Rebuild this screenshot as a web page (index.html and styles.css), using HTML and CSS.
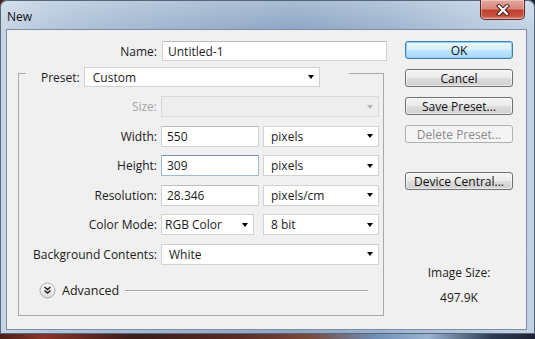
FILE: index.html
```html
<!DOCTYPE html>
<html>
<head>
    <title>New</title>
    <link rel="stylesheet" href="styles.css">
</head>
<body>
    <div class="window">
        <div class="titlebar">
            <span class="title">New</span>
            <div class="close">
                <svg width="14" height="12" viewBox="0 0 14 12">
                    <path d="M3 2 L11 10 M11 2 L3 10" stroke="#4a1e17" stroke-width="4.2" stroke-linecap="square"/>
                    <path d="M3 2 L11 10 M11 2 L3 10" stroke="#fff" stroke-width="2.2" stroke-linecap="square"/>
                </svg>
            </div>
        </div>

        <div class="client">
            <div class="form-side">
                <div class="name-row">
                    <label class="lbl name-lbl" for="name">Name:</label>
                    <input type="text" id="name" class="field name-field" value="Untitled-1">
                </div>

                <div class="group">
                    <div class="group-head">
                        <span class="preset-lbl">Preset:</span>
                        <div class="select preset-select">Custom<span class="arrow"></span></div>
                    </div>

                    <div class="row">
                        <span class="lbl disabled">Size:</span>
                        <div class="select wide off"><span class="arrow"></span></div>
                    </div>

                    <div class="row">
                        <span class="lbl">Width:</span>
                        <div class="pair">
                            <div class="field">550</div>
                            <div class="select">pixels<span class="arrow"></span></div>
                        </div>
                    </div>

                    <div class="row">
                        <span class="lbl">Height:</span>
                        <div class="pair">
                            <div class="field focus">309</div>
                            <div class="select">pixels<span class="arrow"></span></div>
                        </div>
                    </div>

                    <div class="row">
                        <span class="lbl">Resolution:</span>
                        <div class="pair">
                            <div class="field">28.346</div>
                            <div class="select">pixels/cm<span class="arrow"></span></div>
                        </div>
                    </div>

                    <div class="row">
                        <span class="lbl">Color Mode:</span>
                        <div class="pair">
                            <div class="select mode">RGB Color<span class="arrow"></span></div>
                            <div class="select">8 bit<span class="arrow"></span></div>
                        </div>
                    </div>

                    <div class="row">
                        <span class="lbl">Background Contents:</span>
                        <div class="select wide">White<span class="arrow"></span></div>
                    </div>

                    <div class="advanced">
                        <svg class="adv-btn" width="17" height="17" viewBox="0 0 17 17">
                            <defs>
                                <linearGradient id="advg" x1="0" y1="0" x2="0" y2="1">
                                    <stop offset="0" stop-color="#ffffff"/>
                                    <stop offset="1" stop-color="#dcdcdc"/>
                                </linearGradient>
                            </defs>
                            <circle cx="8.5" cy="8.5" r="7.5" fill="url(#advg)" stroke="#a9a9a9"/>
                            <path d="M5.5 5 L8.5 7.5 L11.5 5 M5.5 8.5 L8.5 11 L11.5 8.5" fill="none" stroke="#1a1a1a" stroke-width="1.4"/>
                        </svg>
                        <span class="adv-text">Advanced</span>
                        <span class="adv-line"></span>
                    </div>
                </div>
            </div>

            <div class="button-side">
                <button type="button" class="btn default">OK</button>
                <button type="button" class="btn">Cancel</button>
                <button type="button" class="btn">Save Preset...</button>
                <button type="button" class="btn" disabled>Delete Preset...</button>
                <button type="button" class="btn central">Device Central...</button>

                <div class="size-info">
                    <div>Image Size:</div>
                    <div class="size-value">497.9K</div>
                </div>
            </div>
        </div>
    </div>
</body>
</html>
```

FILE: styles.css
```css
body {
    margin: 0;
    width: 535px;
    height: 339px;
    overflow: hidden;
    font-family: "Open Sans", "Noto Sans", sans-serif;
    font-size: 12px;
    color: #1b1b1b;
    background: linear-gradient(90deg, #4a1f19 0%, #8a3427 8%, #3a1c18 25%, #5b2c24 45%, #7a4a3a 58%, #6f8fb7 70%, #9ab3d2 80%, #2d3b52 92%, #1e2333 100%);
}

.window {
    width: 535px;
    height: 334px;
    box-sizing: border-box;
    padding: 0 8px 4px 6px;
    border-radius: 7px 7px 0 0;
    background:
        linear-gradient(180deg, rgba(255, 255, 255, 0.25) 0%, rgba(255, 255, 255, 0) 30px),
        linear-gradient(90deg, #c7d5e5 0%, #b3c6db 10%, #a6bbd3 22%, #98afcb 40%, #8ea6c4 55%, #9cb3ce 72%, #b4c7dc 88%, #c3d3e5 100%);
    box-shadow: inset 0 0 0 1px #55677d;
}

.titlebar {
    height: 29px;
    display: flex;
    align-items: flex-start;
    justify-content: space-between;
}

.title {
    margin: 8px 0 0 1px;
    font-size: 12px;
    color: #111;
}

.close {
    width: 45px;
    height: 20px;
    margin-right: 2px;
    box-sizing: border-box;
    display: flex;
    align-items: center;
    justify-content: center;
    border: 1px solid #5c2a24;
    border-top: none;
    border-radius: 0 0 5px 5px;
    background: linear-gradient(180deg, #e3a99f 0%, #d7897c 45%, #c3402e 55%, #c8533f 85%, #df8f80 100%);
    box-shadow: inset 0 0 0 1px rgba(255, 255, 255, 0.35);
}

.client {
    height: 301px;
    box-sizing: border-box;
    border: 1px solid #7d8ea4;
    background-color: #f0f0f0;
    display: flex;
}

.form-side {
    padding: 11px 0 0 11px;
}

.name-row {
    display: flex;
    align-items: center;
    height: 20px;
}

.lbl {
    text-align: right;
    white-space: nowrap;
}

.name-lbl {
    width: 139px;
    margin-right: 5px;
}

.field {
    box-sizing: border-box;
    height: 21px;
    padding: 0 5px;
    border: 1px solid #d2d2d2;
    border-top-color: #bcbcbc;
    background-color: #fff;
    font-family: inherit;
    font-size: 12px;
    color: #1b1b1b;
    display: flex;
    align-items: center;
}

.name-field {
    width: 225px;
    height: 20px;
    outline: none;
}

.field.focus {
    border-color: #9cbad6;
    border-top-color: #6f94b8;
}

.group {
    width: 366px;
    height: 243px;
    box-sizing: border-box;
    margin-top: 12px;
    padding: 0 4px 0 0;
    border: 1px solid #a9a9a9;
    display: flex;
    flex-direction: column;
    gap: 8.5px;
}

.group-head {
    display: flex;
    align-items: center;
    margin: -7px 0 0.5px 7px;
    padding: 0 7px 0 15px;
    width: 301px;
    background-color: #f0f0f0;
}

.preset-lbl {
    margin-right: 4px;
}

.select {
    box-sizing: border-box;
    height: 21px;
    padding: 0 0 0 7px;
    border: 1px solid #d2d2d2;
    background-color: #fff;
    display: flex;
    align-items: center;
    white-space: nowrap;
}

.preset-select {
    width: 236px;
    height: 20px;
    padding-left: 8px;
}

.arrow {
    margin-left: auto;
    margin-right: 5px;
    width: 0;
    height: 0;
    border-left: 3.5px solid transparent;
    border-right: 3.5px solid transparent;
    border-top: 4px solid #000;
}

.row {
    display: flex;
    align-items: center;
    gap: 4px;
}

.row .lbl {
    width: 138px;
}

.disabled {
    color: #a4a4a4;
}

.wide {
    width: 218px;
}

.off {
    background-color: #eeeeee;
    border-color: #d9d9d9;
}

.off .arrow {
    border-top-color: #b5b5b5;
}

.pair {
    display: grid;
    grid-template-columns: 98px 116px;
    gap: 4px;
}

.mode {
    width: 93px;
    padding-left: 3px;
}

.advanced {
    display: flex;
    align-items: center;
    margin-top: 9px;
    padding-left: 20px;
}

.adv-btn {
    display: block;
}

.adv-text {
    margin-left: 6px;
    font-size: 12.5px;
}

.adv-line {
    flex: 1;
    margin: 0 11px 0 6px;
    border-top: 1px solid #a3a3a3;
    border-bottom: 1px solid #fff;
}

.button-side {
    margin-left: 18px;
    padding-top: 11px;
    width: 108px;
    display: flex;
    flex-direction: column;
    gap: 10px;
}

.btn {
    height: 18px;
    width: 108px;
    padding: 0;
    border: 1px solid #707070;
    border-radius: 3px;
    font-family: inherit;
    font-size: 12px;
    color: #111;
    background: linear-gradient(180deg, #f4f4f4 0%, #ebebeb 48%, #dddddd 52%, #cfcfcf 100%);
    box-shadow: inset 0 0 0 1px rgba(255, 255, 255, 0.6);
}

.btn.default {
    border-color: #3c7fb1;
    background: linear-gradient(180deg, #eaf6fd 0%, #d9f0fc 48%, #bee6fd 52%, #a7d9f5 100%);
    box-shadow: inset 0 0 0 1px #8ed0f5;
}

.btn:disabled {
    border-color: #adb2b5;
    background: #f4f4f4;
    color: #8a8a8a;
    box-shadow: none;
}

.btn.central {
    margin-top: 19px;
}

.size-info {
    margin-top: 65px;
    text-align: center;
    line-height: 16px;
}

.size-value {
    margin-top: 9px;
}
```
